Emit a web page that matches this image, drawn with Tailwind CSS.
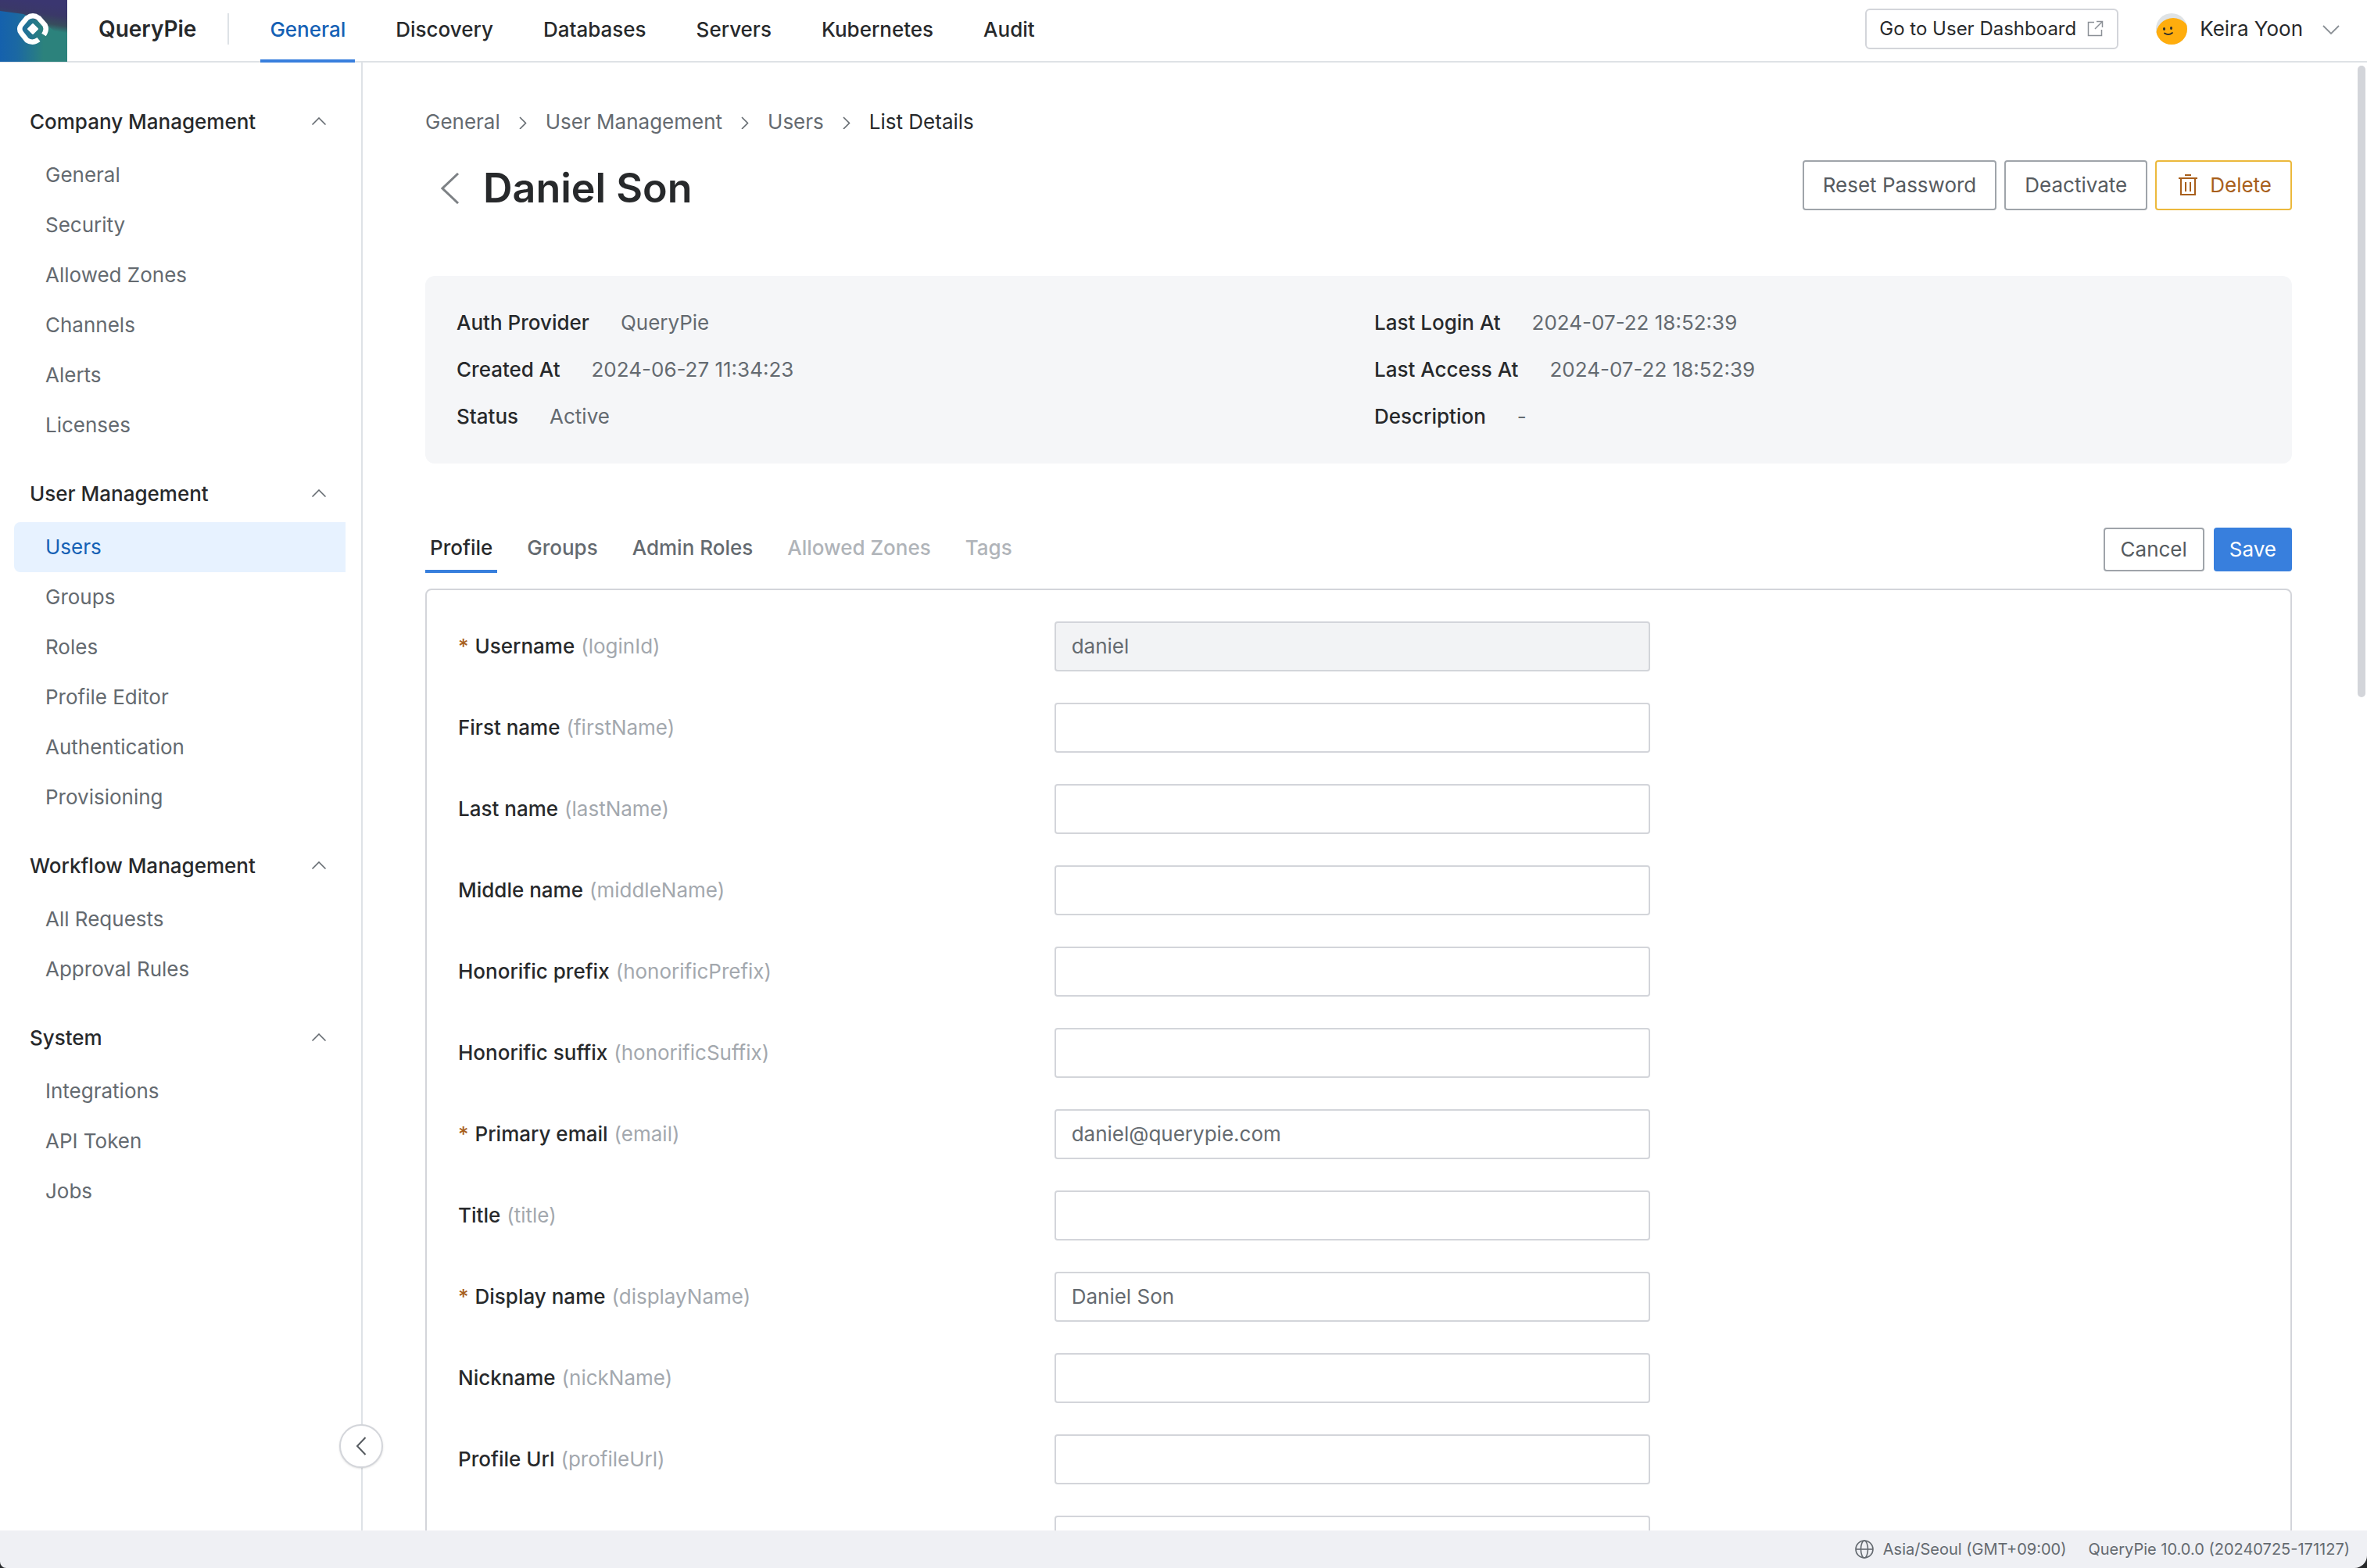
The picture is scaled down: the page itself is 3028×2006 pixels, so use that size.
<!DOCTYPE html>
<html lang="en">

<head>
  <meta charset="UTF-8">
  <title>QueryPie - Daniel Son</title>
  <script src="https://cdn.jsdelivr.net/npm/@tailwindcss/browser@4"></script>
</head>

<body class="flex h-screen flex-col overflow-hidden bg-white font-['Inter',sans-serif] text-[26px] leading-8 text-[#27292b]">

  <!-- Top bar -->
  <header class="flex h-20 shrink-0 items-stretch border-b-2 border-[#dee2e6]">
    <a href="#" aria-label="QueryPie home" class="block h-[79px] w-[86px] shrink-0">
      <svg class="h-full w-full" viewBox="0 0 86 79" preserveAspectRatio="none">
        <defs>
          <linearGradient id="logoBase" x1="0" y1="0" x2="1" y2="0">
            <stop offset="0" stop-color="#1561ad" />
            <stop offset="0.25" stop-color="#1b68a3" />
            <stop offset="0.65" stop-color="#2c827c" />
            <stop offset="1" stop-color="#2c827c" />
          </linearGradient>
          <linearGradient id="logoTop" x1="0.4" y1="0" x2="0.25" y2="0.6">
            <stop offset="0" stop-color="#3a3670" />
            <stop offset="0.4" stop-color="#3a3868" />
            <stop offset="0.75" stop-color="#3a3f55" stop-opacity="0.8" />
            <stop offset="1" stop-color="#3a3f50" stop-opacity="0" />
          </linearGradient>
        </defs>
        <rect width="86" height="79" fill="url(#logoBase)" />
        <path d="M0 0h86v54L60 32 30 18 0 14z" fill="url(#logoTop)" />
        <path d="M56 44.500 57.500 42Q60 37 57.500 32L49.500 23Q42 17.500 34.500 23L27 32Q23.500 37 27 42L34.500 51.500Q42 56.500 49.500 50.500" fill="none" stroke="#fff" stroke-width="6.500" />
        <path d="M42 31 48 37 42 43 36 37z" fill="#fff" stroke="#fff" stroke-width="2" stroke-linejoin="round" />
      </svg>
    </a>
    <div class="flex items-center pb-1 pl-10">
      <span class="text-[28px] font-semibold">QueryPie</span>
      <span class="ml-10 h-10 w-[2px] bg-[#dee2e6]"></span>
    </div>
    <nav class="-mb-[2px] ml-10 flex gap-10 font-medium">
      <a href="#" class="flex items-center border-b-4 border-[#387fdd] px-3 text-[#1561b5]">General</a>
      <a href="#" class="flex items-center border-b-4 border-transparent px-3">Discovery</a>
      <a href="#" class="flex items-center border-b-4 border-transparent px-3">Databases</a>
      <a href="#" class="flex items-center border-b-4 border-transparent px-3">Servers</a>
      <a href="#" class="flex items-center border-b-4 border-transparent px-3">Kubernetes</a>
      <a href="#" class="flex items-center border-b-4 border-transparent px-3">Audit</a>
    </nav>
    <div class="ml-auto flex items-center gap-12 pb-1 pr-[34px]">
      <button class="flex h-[52px] items-center gap-3 rounded-md border-2 border-[#d3d5da] px-4 text-2xl">
        Go to User Dashboard
        <svg class="size-6" viewBox="0 0 24 24" fill="none" stroke="#8b9096" stroke-width="1.500">
          <path d="M11 3.500H3.500v17h17V13M14 2.500h7.500V10M21 3 12 12" />
        </svg>
      </button>
      <button class="flex items-center">
        <svg class="mr-4 size-10" viewBox="0 0 40 40">
          <defs>
            <clipPath id="avatarClip"><circle cx="20" cy="20" r="20" /></clipPath>
          </defs>
          <g clip-path="url(#avatarClip)">
            <rect width="40" height="40" fill="#dfe3e6" />
            <circle cx="22" cy="28" r="22" fill="#ffad0d" />
            <ellipse cx="10.500" cy="20" rx="1.500" ry="2" fill="#27292b" />
            <ellipse cx="19.500" cy="19" rx="1.500" ry="2" fill="#27292b" />
            <path d="M11 25.500Q16 29 21 25" fill="none" stroke="#27292b" stroke-width="1.800" stroke-linecap="round" />
          </g>
        </svg>
        Keira Yoon
        <svg class="ml-6 size-6" viewBox="0 0 24 24" fill="none" stroke="#8b9096" stroke-width="1.800">
          <path d="m2 8 10 10L22 8" />
        </svg>
      </button>
    </div>
  </header>

  <div class="flex min-h-0 flex-1">

    <!-- Sidebar -->
    <aside class="relative w-[464px] shrink-0 border-r-2 border-[#dee2e6] pt-5 text-[#646a70]">
      <section class="mt-5 pl-[18px] pr-5">
        <button class="flex h-[72px] w-full items-center justify-between pl-5 pr-6 font-medium text-[#27292b]">
          Company Management
          <svg class="h-3 w-5" viewBox="0 0 20 12" fill="none" stroke="#646a70" stroke-width="1.600"><path d="m1.500 9.500 8.500-8.500 8.500 8.500" /></svg>
        </button>
        <a href="#" class="flex h-16 items-center rounded-l-lg pl-10">General</a>
        <a href="#" class="flex h-16 items-center rounded-l-lg pl-10">Security</a>
        <a href="#" class="flex h-16 items-center rounded-l-lg pl-10">Allowed Zones</a>
        <a href="#" class="flex h-16 items-center rounded-l-lg pl-10">Channels</a>
        <a href="#" class="flex h-16 items-center rounded-l-lg pl-10">Alerts</a>
        <a href="#" class="flex h-16 items-center rounded-l-lg pl-10">Licenses</a>
      </section>
      <section class="mt-5 pl-[18px] pr-5">
        <button class="flex h-[72px] w-full items-center justify-between pl-5 pr-6 font-medium text-[#27292b]">
          User Management
          <svg class="h-3 w-5" viewBox="0 0 20 12" fill="none" stroke="#646a70" stroke-width="1.600"><path d="m1.500 9.500 8.500-8.500 8.500 8.500" /></svg>
        </button>
        <a href="#" class="flex h-16 items-center rounded-l-lg bg-[#e7f2ff] pl-10 text-[#1561b5]">Users</a>
        <a href="#" class="flex h-16 items-center rounded-l-lg pl-10">Groups</a>
        <a href="#" class="flex h-16 items-center rounded-l-lg pl-10">Roles</a>
        <a href="#" class="flex h-16 items-center rounded-l-lg pl-10">Profile Editor</a>
        <a href="#" class="flex h-16 items-center rounded-l-lg pl-10">Authentication</a>
        <a href="#" class="flex h-16 items-center rounded-l-lg pl-10">Provisioning</a>
      </section>
      <section class="mt-5 pl-[18px] pr-5">
        <button class="flex h-[72px] w-full items-center justify-between pl-5 pr-6 font-medium text-[#27292b]">
          Workflow Management
          <svg class="h-3 w-5" viewBox="0 0 20 12" fill="none" stroke="#646a70" stroke-width="1.600"><path d="m1.500 9.500 8.500-8.500 8.500 8.500" /></svg>
        </button>
        <a href="#" class="flex h-16 items-center rounded-l-lg pl-10">All Requests</a>
        <a href="#" class="flex h-16 items-center rounded-l-lg pl-10">Approval Rules</a>
      </section>
      <section class="mt-5 pl-[18px] pr-5">
        <button class="flex h-[72px] w-full items-center justify-between pl-5 pr-6 font-medium text-[#27292b]">
          System
          <svg class="h-3 w-5" viewBox="0 0 20 12" fill="none" stroke="#646a70" stroke-width="1.600"><path d="m1.500 9.500 8.500-8.500 8.500 8.500" /></svg>
        </button>
        <a href="#" class="flex h-16 items-center rounded-l-lg pl-10">Integrations</a>
        <a href="#" class="flex h-16 items-center rounded-l-lg pl-10">API Token</a>
        <a href="#" class="flex h-16 items-center rounded-l-lg pl-10">Jobs</a>
      </section>
      <button aria-label="Collapse sidebar" class="absolute -right-7 bottom-20 flex size-14 items-center justify-center rounded-full border-2 border-[#d3d5da] bg-white shadow-sm">
        <svg class="size-6" viewBox="0 0 24 24" fill="none" stroke="#565b60" stroke-width="2"><path d="M17.500 1 7 12l10.500 11" /></svg>
      </button>
    </aside>

    <!-- Content -->
    <main class="relative min-w-0 flex-1 overflow-hidden pl-20 pr-24 pt-15">
      <nav aria-label="Breadcrumb" class="flex items-center text-[#646a70]">
        <a href="#">General</a>
        <svg class="mx-6 h-[18px] w-[10px]" viewBox="0 0 10 18" fill="none" stroke="currentColor" stroke-width="1.600"><path d="m1 3 7.500 7.500L1 18" /></svg>
        <a href="#">User Management</a>
        <svg class="mx-6 h-[18px] w-[10px]" viewBox="0 0 10 18" fill="none" stroke="currentColor" stroke-width="1.600"><path d="m1 3 7.500 7.500L1 18" /></svg>
        <a href="#">Users</a>
        <svg class="mx-6 h-[18px] w-[10px]" viewBox="0 0 10 18" fill="none" stroke="currentColor" stroke-width="1.600"><path d="m1 3 7.500 7.500L1 18" /></svg>
        <span class="text-[#27292b]">List Details</span>
      </nav>

      <div class="mt-[33px] flex items-start justify-between">
        <div class="flex h-[72px] items-center">
          <button aria-label="Back" class="ml-5">
            <svg class="h-10 w-6" viewBox="0 0 24 40" fill="none" stroke="#7d8185" stroke-width="3"><path d="M22 1 2 20l20 19" /></svg>
          </button>
          <h1 class="ml-[30px] text-[52px] font-semibold">Daniel Son</h1>
        </div>
        <div class="flex gap-[10px] text-[#565b60]">
          <button class="h-16 rounded-sm border-2 border-[#9fa4aa] px-6">Reset Password</button>
          <button class="h-16 rounded-sm border-2 border-[#9fa4aa] px-6">Deactivate</button>
          <button class="flex h-16 items-center gap-[14px] rounded-sm border-2 border-[#ecb93c] pl-[26px] pr-6 text-[#a85f1c]">
            <svg class="size-7" viewBox="0 0 28 28" fill="none" stroke="currentColor" stroke-width="2">
              <path d="M10 1h8M2 5h24M5 5v21h18V5M11 10v12M17 10v12" />
            </svg>
            Delete
          </button>
        </div>
      </div>

      <dl class="mt-[76px] grid grid-cols-2 gap-x-10 rounded-xl bg-[#f5f6f8] px-10 py-[30px]">
        <div class="flex h-15 items-center gap-10"><dt class="font-medium">Auth Provider</dt><dd class="text-[#646a70]">QueryPie</dd></div>
        <div class="flex h-15 items-center gap-10"><dt class="font-medium">Last Login At</dt><dd class="text-[#646a70]">2024-07-22 18:52:39</dd></div>
        <div class="flex h-15 items-center gap-10"><dt class="font-medium">Created At</dt><dd class="text-[#646a70]">2024-06-27 11:34:23</dd></div>
        <div class="flex h-15 items-center gap-10"><dt class="font-medium">Last Access At</dt><dd class="text-[#646a70]">2024-07-22 18:52:39</dd></div>
        <div class="flex h-15 items-center gap-10"><dt class="font-medium">Status</dt><dd class="text-[#646a70]">Active</dd></div>
        <div class="flex h-15 items-center gap-10"><dt class="font-medium">Description</dt><dd class="text-[#646a70]">-</dd></div>
      </dl>

      <div class="mt-20 flex items-start justify-between">
        <div role="tablist" class="flex gap-8 font-medium text-[#646a70]">
          <button role="tab" aria-selected="true" class="h-15 border-b-4 border-[#387fdd] px-[6px] text-[#27292b]">Profile</button>
          <button role="tab" class="h-15 border-b-4 border-transparent px-[6px]">Groups</button>
          <button role="tab" class="h-15 border-b-4 border-transparent px-[6px]">Admin Roles</button>
          <button role="tab" disabled class="h-15 border-b-4 border-transparent px-[6px] text-[#b0b4b9]">Allowed Zones</button>
          <button role="tab" disabled class="h-15 border-b-4 border-transparent px-[6px] text-[#b0b4b9]">Tags</button>
        </div>
        <div class="flex gap-3 pt-[2px]">
          <button class="h-14 rounded-sm border-2 border-[#9fa4aa] px-5 text-[#565b60]">Cancel</button>
          <button class="h-14 rounded-sm bg-[#387fdd] px-5 text-white">Save</button>
        </div>
      </div>

      <form class="mt-5 flex flex-col gap-10 rounded-lg border-2 border-[#d3d5da] py-10 pl-10 pr-14">
        <div class="grid grid-cols-3 items-center">
          <label for="loginId" class="flex gap-2 font-medium"><span class="text-[#a85f1c]">*</span> Username <span class="font-normal text-[#a3a8ae]">(loginId)</span></label>
          <input id="loginId" type="text" value="daniel" disabled class="h-16 rounded-sm border-2 border-[#d3d5da] bg-[#f2f3f5] px-5 pb-[2px] text-[#646a70]">
        </div>
        <div class="grid grid-cols-3 items-center">
          <label for="firstName" class="flex gap-2 font-medium">First name <span class="font-normal text-[#a3a8ae]">(firstName)</span></label>
          <input id="firstName" type="text" class="h-16 rounded-sm border-2 border-[#d3d5da] px-5 pb-[2px] text-[#646a70]">
        </div>
        <div class="grid grid-cols-3 items-center">
          <label for="lastName" class="flex gap-2 font-medium">Last name <span class="font-normal text-[#a3a8ae]">(lastName)</span></label>
          <input id="lastName" type="text" class="h-16 rounded-sm border-2 border-[#d3d5da] px-5 pb-[2px] text-[#646a70]">
        </div>
        <div class="grid grid-cols-3 items-center">
          <label for="middleName" class="flex gap-2 font-medium">Middle name <span class="font-normal text-[#a3a8ae]">(middleName)</span></label>
          <input id="middleName" type="text" class="h-16 rounded-sm border-2 border-[#d3d5da] px-5 pb-[2px] text-[#646a70]">
        </div>
        <div class="grid grid-cols-3 items-center">
          <label for="honorificPrefix" class="flex gap-2 font-medium">Honorific prefix <span class="font-normal text-[#a3a8ae]">(honorificPrefix)</span></label>
          <input id="honorificPrefix" type="text" class="h-16 rounded-sm border-2 border-[#d3d5da] px-5 pb-[2px] text-[#646a70]">
        </div>
        <div class="grid grid-cols-3 items-center">
          <label for="honorificSuffix" class="flex gap-2 font-medium">Honorific suffix <span class="font-normal text-[#a3a8ae]">(honorificSuffix)</span></label>
          <input id="honorificSuffix" type="text" class="h-16 rounded-sm border-2 border-[#d3d5da] px-5 pb-[2px] text-[#646a70]">
        </div>
        <div class="grid grid-cols-3 items-center">
          <label for="email" class="flex gap-2 font-medium"><span class="text-[#a85f1c]">*</span> Primary email <span class="font-normal text-[#a3a8ae]">(email)</span></label>
          <input id="email" type="text" value="daniel@querypie.com" class="h-16 rounded-sm border-2 border-[#d3d5da] px-5 pb-[2px] text-[#646a70]">
        </div>
        <div class="grid grid-cols-3 items-center">
          <label for="title" class="flex gap-2 font-medium">Title <span class="font-normal text-[#a3a8ae]">(title)</span></label>
          <input id="title" type="text" class="h-16 rounded-sm border-2 border-[#d3d5da] px-5 pb-[2px] text-[#646a70]">
        </div>
        <div class="grid grid-cols-3 items-center">
          <label for="displayName" class="flex gap-2 font-medium"><span class="text-[#a85f1c]">*</span> Display name <span class="font-normal text-[#a3a8ae]">(displayName)</span></label>
          <input id="displayName" type="text" value="Daniel Son" class="h-16 rounded-sm border-2 border-[#d3d5da] px-5 pb-[2px] text-[#646a70]">
        </div>
        <div class="grid grid-cols-3 items-center">
          <label for="nickName" class="flex gap-2 font-medium">Nickname <span class="font-normal text-[#a3a8ae]">(nickName)</span></label>
          <input id="nickName" type="text" class="h-16 rounded-sm border-2 border-[#d3d5da] px-5 pb-[2px] text-[#646a70]">
        </div>
        <div class="grid grid-cols-3 items-center">
          <label for="profileUrl" class="flex gap-2 font-medium">Profile Url <span class="font-normal text-[#a3a8ae]">(profileUrl)</span></label>
          <input id="profileUrl" type="text" class="h-16 rounded-sm border-2 border-[#d3d5da] px-5 pb-[2px] text-[#646a70]">
        </div>
        <div class="grid grid-cols-3 items-center">
          <input type="text" aria-label="Secondary email" class="col-start-2 h-16 rounded-sm border-2 border-[#d3d5da] px-5 pb-[2px] text-[#646a70]">
        </div>
      </form>

      <!-- scroll thumb -->
      <div class="absolute right-[2px] top-1 h-[43%] w-[10px] rounded-full bg-[#d3d5da]"></div>
    </main>
  </div>

  <!-- Status bar -->
  <div class="shrink-0 bg-[#27292b]">
    <footer class="flex h-12 items-center justify-end rounded-bl-lg rounded-br-2xl bg-[#eff0f4] pr-[22px] text-xl text-[#646a70]">
      <svg class="mr-3 size-6" viewBox="0 0 24 24" fill="none" stroke="currentColor" stroke-width="1.600">
        <circle cx="12" cy="12" r="11" />
        <ellipse cx="12" cy="12" rx="4.500" ry="11" />
        <path d="M1 12h22" />
      </svg>
      <span>Asia/Seoul (GMT+09:00)</span>
      <span class="ml-7">QueryPie 10.0.0 (20240725-171127)</span>
    </footer>
  </div>
</body>

</html>
